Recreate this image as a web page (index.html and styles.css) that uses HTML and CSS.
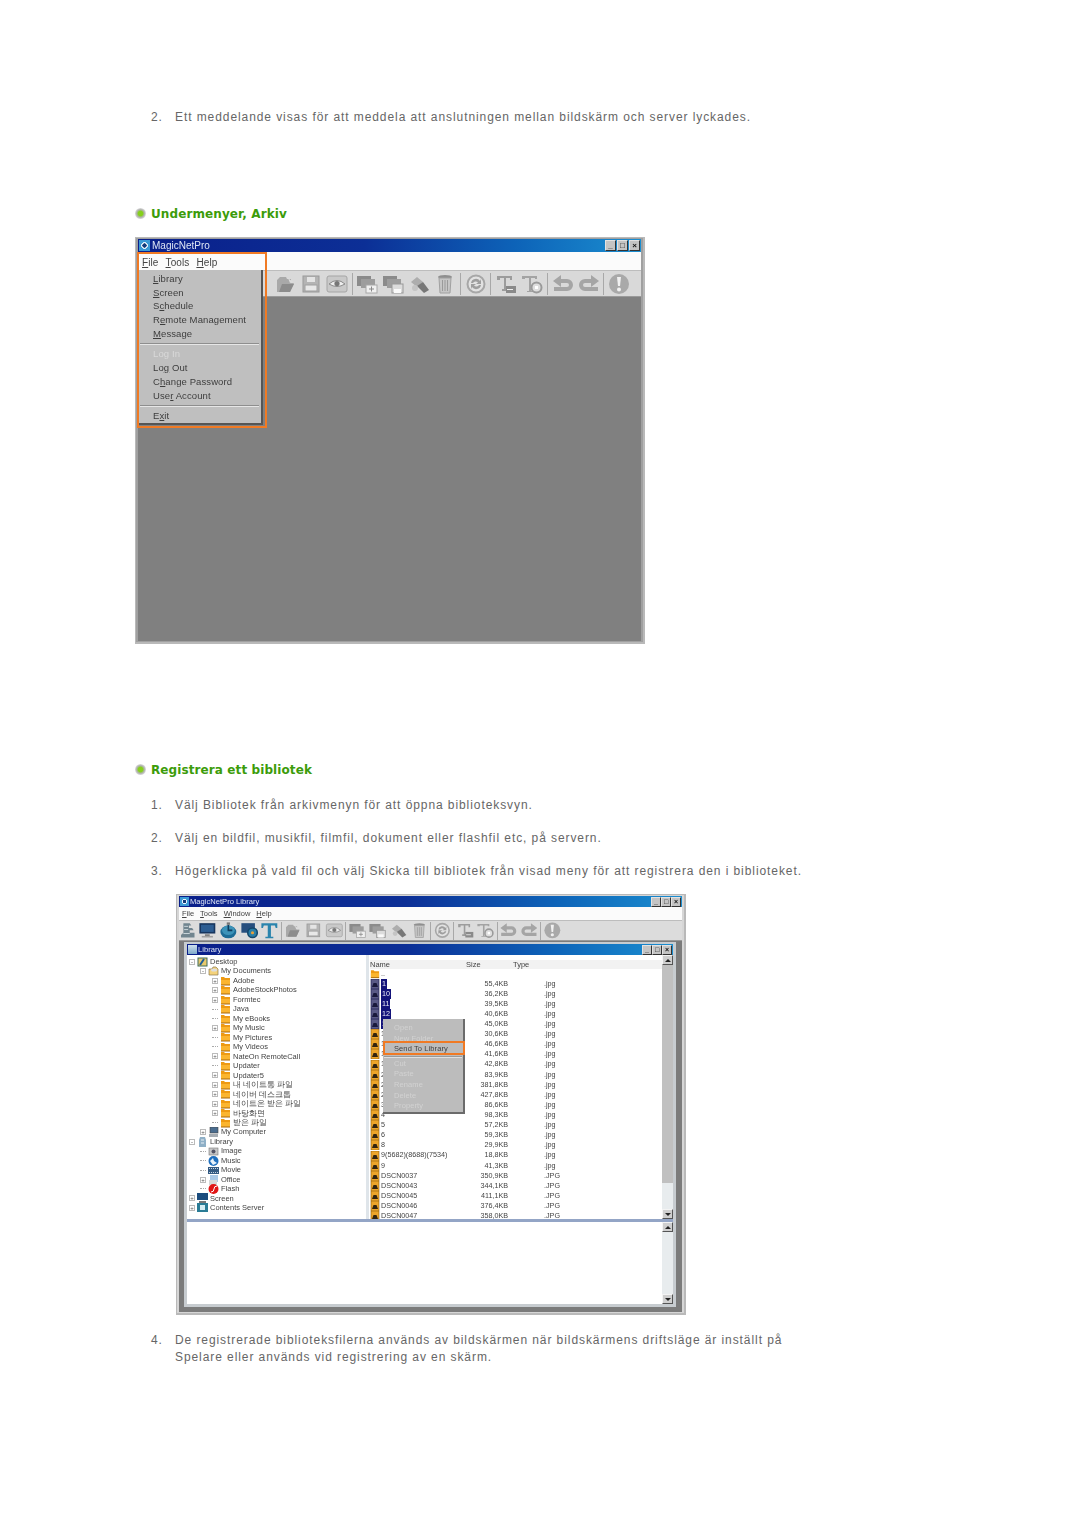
FILE: index.html
```html
<!DOCTYPE html>
<html lang="sv">
<head>
<meta charset="utf-8">
<title>Undermenyer, Arkiv</title>
<link rel="stylesheet" href="styles.css">
</head>
<body>
<svg class="defs" width="0" height="0" aria-hidden="true">
  <symbol id="i-folder" viewBox="0 0 26 26"><path d="M5 21V9l3-3h6l1 2h4v4h3l-4 9z" fill="#a9a9a9"/><path d="M7 21l3-8h12l-4 8z" fill="#8c8c8c"/><path d="M16 7l5 4-3 1z" fill="#ddd"/></symbol>
  <symbol id="i-save" viewBox="0 0 26 26"><rect x="5" y="5" width="16" height="16" fill="#b4b4b4" stroke="#9a9a9a"/><rect x="9" y="6" width="8" height="5" fill="#e4e4e4"/><rect x="7" y="14" width="12" height="6" fill="#e8e8e8" stroke="#a0a0a0"/></symbol>
  <symbol id="i-eye" viewBox="0 0 26 26"><rect x="3" y="5" width="20" height="16" rx="2" fill="#c9c9c9" stroke="#a5a5a5"/><path d="M5 13q8-7 16 0q-8 5-16 0z" fill="#eee" stroke="#8a8a8a"/><circle cx="13" cy="12.500" r="2.600" fill="#777"/></symbol>
  <symbol id="i-monplus" viewBox="0 0 26 26"><rect x="3" y="5" width="14" height="10" fill="#8b8b8b"/><rect x="7" y="8" width="14" height="9" fill="#9d9d9d"/><rect x="12" y="14" width="11" height="8" fill="#f0f0f0" stroke="#a8a8a8"/><path d="M17.500 15.500v5M15 18h5" stroke="#888" fill="none"/></symbol>
  <symbol id="i-monsave" viewBox="0 0 26 26"><rect x="3" y="5" width="14" height="10" fill="#8b8b8b"/><rect x="7" y="8" width="14" height="9" fill="#9d9d9d"/><rect x="12" y="13" width="11" height="9" fill="#dcdcdc" stroke="#999"/><rect x="14" y="18" width="7" height="4" fill="#fafafa"/></symbol>
  <symbol id="i-tool" viewBox="0 0 26 26"><path d="M5 11l6-5 6 5-6 5z" fill="#adadad"/><path d="M11 15l6-4 6 8-5 3z" fill="#777"/><circle cx="9" cy="17" r="3" fill="#c4c4c4"/></symbol>
  <symbol id="i-trash" viewBox="0 0 26 26"><ellipse cx="13" cy="6" rx="7" ry="2" fill="#8f8f8f"/><path d="M7 7h12l-1 15H8z" fill="#c6c6c6" stroke="#a0a0a0"/><path d="M10.500 9v11M13 9v11M15.500 9v11" stroke="#9a9a9a" fill="none"/></symbol>
  <symbol id="i-sync" viewBox="0 0 26 26"><circle cx="13" cy="13" r="8.500" fill="#e2e2e2" stroke="#a7a7a7" stroke-width="2"/><path d="M8 12a5 5 0 0 1 9-2l1-2v5h-5l2-1.500a3 3 0 0 0-5 .5zM18 14a5 5 0 0 1-9 2l-1 2v-5h5l-2 1.500a3 3 0 0 0 5-.5z" fill="#9e9e9e"/></symbol>
  <symbol id="i-t1" viewBox="0 0 26 26"><path d="M4 5h15v4h-2V7h-4v11h2v2H9v-2h2V7H7v2H4z" fill="#9c9c9c"/><rect x="13" y="15" width="10" height="7" fill="#8a8a8a"/><path d="M14 18.500h6" stroke="#eee"/></symbol>
  <symbol id="i-t2" viewBox="0 0 26 26"><path d="M3 5h15v3h-2V7h-4v13h2v1H8v-1h2V7H6v1H3z" fill="#a3a3a3"/><circle cx="17.500" cy="16.500" r="5" fill="#dedede" stroke="#9a9a9a" stroke-width="2"/><rect x="16" y="15" width="3" height="3" fill="#fff"/></symbol>
  <symbol id="i-undo" viewBox="0 0 26 26"><path d="M11 4v4h6a6 6 0 0 1 0 12H4v-4h13a2 2 0 0 0 0-4h-6v4L3 10z" fill="#a5a5a5"/></symbol>
  <symbol id="i-redo" viewBox="0 0 26 26"><path d="M15 4v4H9a6 6 0 0 0 0 12h13v-4H9a2 2 0 0 1 0-4h6v4l8-6z" fill="#a5a5a5"/></symbol>
  <symbol id="i-warn" viewBox="0 0 26 26"><circle cx="13" cy="13" r="10" fill="#a9a9a9"/><path d="M11 6h4l-1 9h-2z" fill="#f1f1f1"/><circle cx="13" cy="18.500" r="2" fill="#f1f1f1"/></symbol>
  <symbol id="c-lib" viewBox="0 0 26 26"><path d="M8 4h8l2 3h-3v3h4l2 3h-5v3h6v6H5v-3l3-3V4z" fill="#71858f"/><path d="M9 8h5M9 12h5M8 17h8" stroke="#dfe8ec" fill="none"/></symbol>
  <symbol id="c-mon" viewBox="0 0 26 26"><rect x="3" y="4" width="20" height="13" fill="#17365f"/><rect x="5" y="6" width="16" height="9" fill="#2c5d92"/><rect x="10" y="18" width="6" height="2" fill="#777"/><rect x="6" y="20" width="14" height="2" fill="#a0a0a0"/></symbol>
  <symbol id="c-clock" viewBox="0 0 26 26"><ellipse cx="13" cy="15" rx="10" ry="8" fill="#1d6c96"/><ellipse cx="13" cy="13" rx="8" ry="6" fill="#3c93b9"/><path d="M13 6v7h5" stroke="#0e3d5d" stroke-width="2" fill="none"/><rect x="11" y="3" width="4" height="3" fill="#777"/></symbol>
  <symbol id="c-gear" viewBox="0 0 26 26"><rect x="3" y="4" width="17" height="12" fill="#274f7e"/><circle cx="17" cy="16" r="6" fill="#2a7fa8" stroke="#14486c" stroke-width="2"/><circle cx="17" cy="16" r="2" fill="#e8a03a"/></symbol>
  <symbol id="c-t" viewBox="0 0 26 26"><path d="M3 4h20v6h-2l-1-3h-5v14h3v2H8v-2h3V7H6L5 10H3z" fill="#2a84ad"/></symbol>
  <symbol id="t-folder" viewBox="0 0 11 10"><path d="M1 9V1h3l1 1h5v7z" fill="#ee9a12"/><path d="M1 4h9v5H1z" fill="#fbb52f"/><path d="M1 9h9" stroke="#a9690a" fill="none"/></symbol>
  <symbol id="t-desk" viewBox="0 0 11 10"><rect x="1" y="1" width="9" height="8" fill="#e8c96c" stroke="#3c6a5a"/><path d="M3 8l4-6" stroke="#1d5e99" stroke-width="2"/></symbol>
  <symbol id="t-docs" viewBox="0 0 11 10"><path d="M1 9V3h3l1-2h3l2 2v6z" fill="#f4d27a" stroke="#8a7a52" stroke-width=".7"/><ellipse cx="6" cy="4" rx="3" ry="1.500" fill="#ddd"/></symbol>
  <symbol id="t-pc" viewBox="0 0 11 10"><rect x="2" y="0" width="8" height="6" fill="#4a6d8f" stroke="#444" stroke-width=".6"/><rect x="1" y="7" width="9" height="3" fill="#a6adb3"/></symbol>
  <symbol id="t-lib" viewBox="0 0 11 10"><path d="M3 0h5l1 3v7H2V3z" fill="#8fb0c7"/><path d="M4 3h3M4 6h3" stroke="#e6eef4"/></symbol>
  <symbol id="t-img" viewBox="0 0 11 10"><rect x="1" y="2" width="9" height="7" fill="#c7c7c7" stroke="#777" stroke-width=".6"/><circle cx="5.500" cy="5.500" r="2" fill="#556"/></symbol>
  <symbol id="t-music" viewBox="0 0 11 10"><circle cx="5.500" cy="5" r="5" fill="#1f6fbe"/><path d="M2 5l3-3 1 3 3 2-4 2z" fill="#e9f3fb"/></symbol>
  <symbol id="t-movie" viewBox="0 0 11 10"><rect x="0" y="2" width="11" height="7" fill="#345a82"/><path d="M1 3.500h9M1 7.500h9" stroke="#c5d5e4" stroke-dasharray="1 1"/></symbol>
  <symbol id="t-office" viewBox="0 0 11 10"><rect x="2" y="0" width="8" height="7" fill="#a9c8e6"/><rect x="1" y="5" width="8" height="5" fill="#d6d6d6"/></symbol>
  <symbol id="t-flash" viewBox="0 0 11 10"><circle cx="5.500" cy="5" r="5" fill="#e01414"/><path d="M3 8q3 0 3-3t3-3" stroke="#fff" fill="none"/></symbol>
  <symbol id="t-screen" viewBox="0 0 11 10"><rect x="0" y="0" width="11" height="7" fill="#1c4d7e"/><rect x="2" y="8" width="7" height="2" fill="#777"/></symbol>
  <symbol id="t-server" viewBox="0 0 11 10"><rect x="0" y="0" width="11" height="9" fill="#2a7c96"/><rect x="3" y="2" width="5" height="5" fill="#d5edf3"/></symbol>
  <symbol id="t-jpg" viewBox="0 0 10 10"><rect x="1" y="0" width="8" height="10" fill="#eda52a" stroke="#8a5c10" stroke-width=".6"/><path d="M2 8l1.500-4h3L8 8z" fill="#33240f"/></symbol>
  <symbol id="t-sel" viewBox="0 0 10 10"><rect x="1" y="0" width="8" height="10" fill="#5a5a86" stroke="#16164c" stroke-width=".6"/><path d="M2 8l1.500-4h3L8 8z" fill="#1a1a3c"/></symbol>
</svg>

<main class="page">
  <div class="step"><span class="num">2.</span><p>Ett meddelande visas för att meddela att anslutningen mellan bildskärm och server lyckades.</p></div>

  <h2 class="heading first"><span class="dot"></span>Undermenyer, Arkiv</h2>

  <figure class="win big">
    <div class="titlebar"><span class="appicon"></span><span class="title">MagicNetPro</span><span class="wbtns"><b>_</b><b>□</b><b>×</b></span></div>
    <div class="menubar"><span><u>F</u>ile</span><span><u>T</u>ools</span><span><u>H</u>elp</span></div>
    <div class="toolbar">
      <svg><use href="#i-folder"/></svg><svg><use href="#i-save"/></svg><svg><use href="#i-eye"/></svg><i class="sep"></i>
      <svg><use href="#i-monplus"/></svg><svg><use href="#i-monsave"/></svg><svg><use href="#i-tool"/></svg><svg><use href="#i-trash"/></svg><i class="sep"></i>
      <svg><use href="#i-sync"/></svg><i class="sep"></i>
      <svg><use href="#i-t1"/></svg><svg><use href="#i-t2"/></svg><i class="sep"></i>
      <svg><use href="#i-undo"/></svg><svg><use href="#i-redo"/></svg><i class="sep"></i>
      <svg><use href="#i-warn"/></svg>
    </div>
    <div class="workspace"></div>
    <div class="filemenu">
      <div><u>L</u>ibrary</div><div><u>S</u>creen</div><div>S<u>c</u>hedule</div><div>R<u>e</u>mote Management</div><div><u>M</u>essage</div>
      <hr>
      <div class="off">Log In</div><div>Lo<u>g</u> Out</div><div>C<u>h</u>ange Password</div><div>Use<u>r</u> Account</div>
      <hr>
      <div>E<u>x</u>it</div>
    </div>
    <div class="mark mark-file"></div>
  </figure>

  <h2 class="heading second"><span class="dot"></span>Registrera ett bibliotek</h2>

  <div class="step"><span class="num">1.</span><p>Välj Bibliotek från arkivmenyn för att öppna biblioteksvyn.</p></div>
  <div class="step"><span class="num">2.</span><p>Välj en bildfil, musikfil, filmfil, dokument eller flashfil etc, på servern.</p></div>
  <div class="step"><span class="num">3.</span><p>Högerklicka på vald fil och välj Skicka till bibliotek från visad meny för att registrera den i biblioteket.</p></div>

  <figure class="win lib">
    <div class="titlebar"><span class="appicon"></span><span class="title">MagicNetPro Library</span><span class="wbtns"><b>_</b><b>□</b><b>×</b></span></div>
    <div class="menubar"><span><u>F</u>ile</span><span><u>T</u>ools</span><span><u>W</u>indow</span><span><u>H</u>elp</span></div>
    <div class="toolbar">
      <svg><use href="#c-lib"/></svg><svg><use href="#c-mon"/></svg><svg><use href="#c-clock"/></svg><svg><use href="#c-gear"/></svg><svg><use href="#c-t"/></svg><i class="sep"></i>
      <svg><use href="#i-folder"/></svg><svg><use href="#i-save"/></svg><svg><use href="#i-eye"/></svg><i class="sep"></i>
      <svg><use href="#i-monplus"/></svg><svg><use href="#i-monsave"/></svg><svg><use href="#i-tool"/></svg><svg><use href="#i-trash"/></svg><i class="sep"></i>
      <svg><use href="#i-sync"/></svg><i class="sep"></i>
      <svg><use href="#i-t1"/></svg><svg><use href="#i-t2"/></svg><i class="sep"></i>
      <svg><use href="#i-undo"/></svg><svg><use href="#i-redo"/></svg><i class="sep"></i>
      <svg><use href="#i-warn"/></svg>
    </div>
    <div class="mdi">
      <div class="child">
        <div class="titlebar small"><span class="appicon doc"></span><span class="title">Library</span><span class="wbtns"><b>_</b><b>□</b><b>×</b></span></div>
        <div class="upper">
          <div class="tree">
            <div class="node l0"><i class="exp">-</i><svg><use href="#t-desk"/></svg>Desktop</div>
            <div class="node l1"><i class="exp">-</i><svg><use href="#t-docs"/></svg>My Documents</div>
            <div class="node l2"><i class="exp">+</i><svg><use href="#t-folder"/></svg>Adobe</div>
            <div class="node l2"><i class="exp">+</i><svg><use href="#t-folder"/></svg>AdobeStockPhotos</div>
            <div class="node l2"><i class="exp">+</i><svg><use href="#t-folder"/></svg>Formtec</div>
            <div class="node l2"><i class="exp none"></i><svg><use href="#t-folder"/></svg>Java</div>
            <div class="node l2"><i class="exp none"></i><svg><use href="#t-folder"/></svg>My eBooks</div>
            <div class="node l2"><i class="exp">+</i><svg><use href="#t-folder"/></svg>My Music</div>
            <div class="node l2"><i class="exp none"></i><svg><use href="#t-folder"/></svg>My Pictures</div>
            <div class="node l2"><i class="exp none"></i><svg><use href="#t-folder"/></svg>My Videos</div>
            <div class="node l2"><i class="exp">+</i><svg><use href="#t-folder"/></svg>NateOn RemoteCall</div>
            <div class="node l2"><i class="exp none"></i><svg><use href="#t-folder"/></svg>Updater</div>
            <div class="node l2"><i class="exp">+</i><svg><use href="#t-folder"/></svg>Updater5</div>
            <div class="node l2"><i class="exp">+</i><svg><use href="#t-folder"/></svg>내 네이트통 파일</div>
            <div class="node l2"><i class="exp">+</i><svg><use href="#t-folder"/></svg>네이버 데스크톱</div>
            <div class="node l2"><i class="exp">+</i><svg><use href="#t-folder"/></svg>네이트온 받은 파일</div>
            <div class="node l2"><i class="exp">+</i><svg><use href="#t-folder"/></svg>바탕화면</div>
            <div class="node l2"><i class="exp none"></i><svg><use href="#t-folder"/></svg>받은 파일</div>
            <div class="node l1"><i class="exp">+</i><svg><use href="#t-pc"/></svg>My Computer</div>
            <div class="node l0"><i class="exp">-</i><svg><use href="#t-lib"/></svg>Library</div>
            <div class="node l1"><i class="exp none"></i><svg><use href="#t-img"/></svg>Image</div>
            <div class="node l1"><i class="exp none"></i><svg><use href="#t-music"/></svg>Music</div>
            <div class="node l1"><i class="exp none"></i><svg><use href="#t-movie"/></svg>Movie</div>
            <div class="node l1"><i class="exp">+</i><svg><use href="#t-office"/></svg>Office</div>
            <div class="node l1"><i class="exp none"></i><svg><use href="#t-flash"/></svg>Flash</div>
            <div class="node l0"><i class="exp">+</i><svg><use href="#t-screen"/></svg>Screen</div>
            <div class="node l0"><i class="exp">+</i><svg><use href="#t-server"/></svg>Contents Server</div>
          </div>
          <div class="files">
            <div class="fhead"><span>Name</span><span>Size</span><span>Type</span></div>
            <div class="frow"><span class="fname"><svg><use href="#t-folder"/></svg>..</span></div>
            <div class="frow"><span class="fname sel"><svg><use href="#t-sel"/></svg><em>1</em></span><span>55,4KB</span><span>.jpg</span></div>
            <div class="frow"><span class="fname sel"><svg><use href="#t-sel"/></svg><em>10</em></span><span>36,2KB</span><span>.jpg</span></div>
            <div class="frow"><span class="fname sel"><svg><use href="#t-sel"/></svg><em>11</em></span><span>39,5KB</span><span>.jpg</span></div>
            <div class="frow"><span class="fname sel"><svg><use href="#t-sel"/></svg><em>12</em></span><span>40,6KB</span><span>.jpg</span></div>
            <div class="frow"><span class="fname sel"><svg><use href="#t-sel"/></svg><em>1</em></span><span>45,0KB</span><span>.jpg</span></div>
            <div class="frow"><span class="fname"><svg><use href="#t-jpg"/></svg>1</span><span>30,6KB</span><span>.jpg</span></div>
            <div class="frow"><span class="fname"><svg><use href="#t-jpg"/></svg>1</span><span>46,6KB</span><span>.jpg</span></div>
            <div class="frow"><span class="fname"><svg><use href="#t-jpg"/></svg>1</span><span>41,6KB</span><span>.jpg</span></div>
            <div class="frow"><span class="fname"><svg><use href="#t-jpg"/></svg>1</span><span>42,8KB</span><span>.jpg</span></div>
            <div class="frow"><span class="fname"><svg><use href="#t-jpg"/></svg>2</span><span>83,9KB</span><span>.jpg</span></div>
            <div class="frow"><span class="fname"><svg><use href="#t-jpg"/></svg>2</span><span>381,8KB</span><span>.jpg</span></div>
            <div class="frow"><span class="fname"><svg><use href="#t-jpg"/></svg>2</span><span>427,8KB</span><span>.jpg</span></div>
            <div class="frow"><span class="fname"><svg><use href="#t-jpg"/></svg>3</span><span>86,6KB</span><span>.jpg</span></div>
            <div class="frow"><span class="fname"><svg><use href="#t-jpg"/></svg>4</span><span>98,3KB</span><span>.jpg</span></div>
            <div class="frow"><span class="fname"><svg><use href="#t-jpg"/></svg>5</span><span>57,2KB</span><span>.jpg</span></div>
            <div class="frow"><span class="fname"><svg><use href="#t-jpg"/></svg>6</span><span>59,3KB</span><span>.jpg</span></div>
            <div class="frow"><span class="fname"><svg><use href="#t-jpg"/></svg>8</span><span>29,9KB</span><span>.jpg</span></div>
            <div class="frow"><span class="fname"><svg><use href="#t-jpg"/></svg>9(5682)(8688)(7534)</span><span>18,8KB</span><span>.jpg</span></div>
            <div class="frow"><span class="fname"><svg><use href="#t-jpg"/></svg>9</span><span>41,3KB</span><span>.jpg</span></div>
            <div class="frow"><span class="fname"><svg><use href="#t-jpg"/></svg>DSCN0037</span><span>350,9KB</span><span>.JPG</span></div>
            <div class="frow"><span class="fname"><svg><use href="#t-jpg"/></svg>DSCN0043</span><span>344,1KB</span><span>.JPG</span></div>
            <div class="frow"><span class="fname"><svg><use href="#t-jpg"/></svg>DSCN0045</span><span>411,1KB</span><span>.JPG</span></div>
            <div class="frow"><span class="fname"><svg><use href="#t-jpg"/></svg>DSCN0046</span><span>376,4KB</span><span>.JPG</span></div>
            <div class="frow"><span class="fname"><svg><use href="#t-jpg"/></svg>DSCN0047</span><span>358,0KB</span><span>.JPG</span></div>
          </div>
          <div class="scroll main"><b class="up"></b><span class="thumb"></span><span class="track"></span><b class="down"></b></div>
        </div>
        <div class="divider"></div>
        <div class="lower">
          <div class="blank"></div>
          <div class="scroll"><b class="up"></b><span class="track"></span><b class="down"></b></div>
        </div>
      </div>
    </div>
    <div class="ctx">
      <div class="off">Open</div><div class="off">New Folder</div><div class="on">Send To Library</div>
      <hr>
      <div class="off">Cut</div><div class="off">Paste</div><div class="off">Rename</div><div class="off">Delete</div><div class="off">Property</div>
    </div>
    <div class="mark mark-send"></div>
  </figure>

  <div class="step last"><span class="num">4.</span><p>De registrerade biblioteksfilerna används av bildskärmen när bildskärmens driftsläge är inställt på<br>Spelare eller används vid registrering av en skärm.</p></div>
</main>
</body>
</html>
```

FILE: styles.css
```css
* { box-sizing: border-box; }
html, body { margin: 0; padding: 0; background: #fff; }
.defs { position: absolute; }
.page {
  min-height: 1528px;
  padding: 109px 0 0 135px;
  font-family: "Liberation Sans", Arial, sans-serif;
}

/* numbered text */
.step { display: flex; margin-bottom: 15.750px; font-size: 12px; line-height: 17px; letter-spacing: .92px; color: #666; }
.step p { margin: 0; }
.num { flex: none; width: 40px; padding-left: 16px; }
.step.last { margin-top: 17px; margin-bottom: 0; }

/* green headings */
.heading {
  display: flex; align-items: center; gap: 5px;
  margin: 0; height: 17px;
  font-family: "DejaVu Sans", Verdana, sans-serif;
  font-size: 12px; font-weight: 700; color: #3c9c0a;
  letter-spacing: .1px;
}
.heading.first { margin-top: 79px; margin-bottom: 15px; }
.heading.second { margin-top: 117px; margin-bottom: 19px; }
.dot {
  flex: none; width: 11px; height: 11px; border-radius: 50%;
  background: radial-gradient(circle closest-side, #86d01c 0 42%, #9fbc78 58%, #b9b9b9 76%, #dedede 100%);
}

/* screenshot frames */
.win {
  position: relative; display: flex; flex-direction: column;
  width: 510px; margin: 0;
  border: 1px solid #b9b9b9; border-width: 1px 2px 2px 1px;
  background: #d6d6d6;
  padding: 1px 2px;
  filter: blur(.7px);
  font-family: "Liberation Sans", Arial, sans-serif;
  color: #333;
}
.win.big { height: 407px; background: #a0a0a0; }
.win.lib { height: 421px; margin: -1.250px 0 0 41px; }

.titlebar {
  display: flex; align-items: center; flex: none; height: 13px; gap: 2px; padding: 0 1px;
  background: linear-gradient(90deg, #0a1f8a 0%, #0c2f96 45%, #0d63b8 75%, #1b8ed0 100%);
  color: #dfe6f5; font-size: 10px;
}
.appicon { flex: none; width: 11px; height: 11px; background: radial-gradient(circle, #143a7a 0 25%, #e8f3fb 30% 40%, #3b9ad6 45%); }
.appicon.doc { background: linear-gradient(#cfe0ee, #7fa9c9); }
.title { flex: 1; }
.wbtns { display: flex; gap: 1px; flex: none; }
.wbtns b {
  display: flex; align-items: center; justify-content: center;
  width: 11px; height: 11px; background: #c4c4c4; border: 1px solid; border-color: #e2e2e2 #333 #333 #e2e2e2;
  font: 700 8px/1 "Liberation Sans", sans-serif; color: #111;
}
.menubar { display: flex; flex: none; gap: 7px; height: 18px; padding: 2px 0 0 4px; align-items: center; background: #fbfbfb; font-size: 10px; letter-spacing: .1px; color: #444; }
.toolbar { display: flex; flex: none; align-items: center; height: 27px; padding-left: 134px; background: #d9d9d9; border-top: 1px solid #bdbdbd; border-bottom: 1px solid #9a9a9a; }
.toolbar svg { flex: none; width: 26px; height: 26px; }
.sep { flex: none; width: 1px; height: 22px; margin: 0 1.700px; background: #a8a8a8; }
.workspace { flex: 1; background: #808080; }

/* Arkiv dropdown and highlight */
.filemenu {
  position: absolute; left: 2px; top: 32px; width: 125px; height: 155px;
  padding-top: 2px;
  background: #bfbfbf; border-right: 2px solid #555; border-bottom: 2px solid #555;
  font-size: 9.500px; letter-spacing: .1px; color: #3d3d3d;
}
.filemenu div { height: 13.700px; line-height: 13.700px; padding-left: 15px; }
.filemenu hr { height: 2px; margin: 2.500px 2px; border: 0; background: linear-gradient(#8e8e8e 50%, #e6e6e6 50%); }
.filemenu .off { color: #d9d9d9; }
.mark { position: absolute; border: 2px solid #f07a24; }
.mark-file { left: 1px; top: 14px; width: 130px; height: 176px; }

/* library window */
.lib .titlebar { height: 11px; gap: 1px; font-size: 7.600px; }
.lib .appicon { width: 9px; height: 9px; }
.lib .wbtns { gap: 0; }
.lib .wbtns b { width: 10px; height: 10px; font-size: 7px; }
.lib .menubar { height: 13px; padding: 0 0 0 3px; gap: 6px; font-size: 7.500px; letter-spacing: 0; }
.lib .toolbar { height: 21px; padding-left: 0; background: #dcdcdc; }
.lib .toolbar svg { width: 20.700px; height: 20.700px; }
.lib .toolbar svg:first-child { margin-left: -2.500px; }
.lib .sep { height: 18px; margin: 0 .650px; }
.mdi { flex: 1; padding: 1px 6px 5px 5px; background: #7b7b7b; min-height: 0; display: flex; }
.child { flex: 1; display: flex; flex-direction: column; padding: 2px 3px 3px; background: #c7ccd0; min-width: 0; }
.upper { display: flex; flex: none; height: 264px; background: #fff; }
.tree { flex: none; width: 182px; padding-top: 2px; border-right: 3px solid #dfe5ea; font-size: 7.500px; line-height: 9.480px; color: #444; overflow: hidden; }
.node { display: flex; align-items: center; height: 9.480px; white-space: nowrap; }
.node svg { flex: none; width: 11px; height: 10px; margin-right: 2px; }
.l0 { padding-left: 2px; }
.l1 { padding-left: 13px; }
.l2 { padding-left: 25px; }
.exp {
  flex: none; display: flex; align-items: center; justify-content: center;
  width: 6px; height: 6px; margin-right: 2px; border: 1px solid #bbb;
  font: 400 6px/1 "Liberation Sans", sans-serif; color: #555;
}
.exp.none { border: 0; border-bottom: 1px dotted #aaa; height: 1px; }
.files { flex: 1; min-width: 0; padding: 4.500px 0 0 1px; font-size: 7.200px; color: #444; overflow: hidden; }
.fhead { display: grid; grid-template-columns: 96px 47px 1fr; height: 9px; line-height: 9px; background: #f2f2f2; font-size: 7.500px; }
.frow { display: grid; grid-template-columns: 100px 38px 1fr; height: 10.120px; line-height: 10.120px; }
.frow > span:nth-child(2) { text-align: right; }
.frow > span:nth-child(3) { padding-left: 36px; }
.fname { display: flex; align-items: center; white-space: nowrap; }
.fname svg { flex: none; width: 10px; height: 10px; margin-right: 1px; }
.fname em { font-style: normal; background: #13137a; color: #e8e8f4; padding: 0 1px; line-height: 10px; }
.scroll { flex: none; width: 11px; display: flex; flex-direction: column; background: #e4e8ea; }
.scroll b { flex: none; height: 10px; background: #cfcfcf; border: 1px solid; border-color: #f4f4f4 #555 #555 #f4f4f4; position: relative; }
.scroll .up::after, .scroll .down::after { content: ""; position: absolute; left: 2px; border: 3px solid transparent; }
.scroll .up::after { top: 0; border-bottom-color: #222; }
.scroll .down::after { top: 3px; border-top-color: #222; }
.scroll .thumb { flex: none; height: 218px; background: #c0c0c0; }
.scroll .track { flex: 1; background: #e8ecee; }
.divider { flex: none; height: 3px; background: #93a5c6; }
.lower { flex: 1; display: flex; background: #fff; min-height: 0; }
.blank { flex: 1; }

/* context menu */
.ctx {
  position: absolute; left: 206px; top: 124px; width: 82px; height: 95px;
  padding-top: 4px;
  background: #bcbcbc; border-right: 2px solid #6b6b6b; border-bottom: 2px solid #6b6b6b;
  font-size: 7.500px; color: #d2d2d2; letter-spacing: .1px;
}
.ctx div { height: 10.600px; line-height: 10.600px; padding-left: 11px; }
.ctx .on { color: #3f3f3f; }
.ctx hr { height: 2px; margin: 1px 1px; border: 0; background: linear-gradient(#999 50%, #e0e0e0 50%); }
.mark-send { left: 206px; top: 146px; width: 82px; height: 14px; }
```
